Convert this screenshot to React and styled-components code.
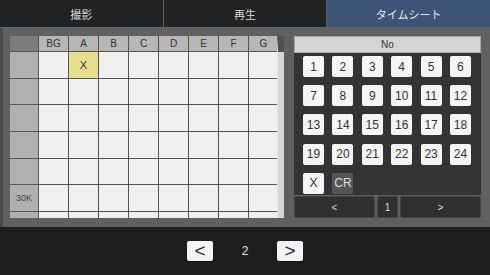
import React from "react";
import styled, { createGlobalStyle } from "styled-components";

const GlobalStyle = createGlobalStyle`
  body {
    margin: 0;
    background: #1e1e1e;
    font-family: "Liberation Sans", "Noto Sans CJK JP", sans-serif;
    -webkit-font-smoothing: antialiased;
  }
`;

const Screen = styled.div`
  width: 490px;
  height: 275px;
  display: flex;
  flex-direction: column;
  overflow: hidden;
`;

const TabBar = styled.div`
  display: flex;
  height: 27px;
  gap: 1px;
  background: #5a5f66;
  border-bottom: 1px solid #5b6676;
`;

const Tab = styled.div`
  flex: 1;
  display: flex;
  align-items: center;
  justify-content: center;
  font-size: 11px;
  color: ${(p) => (p.$active ? "#e4e8ee" : "#d8d8d8")};
  background: ${(p) => (p.$active ? "#3c5576" : "#222222")};
`;

const Main = styled.div`
  height: 199px;
  display: flex;
  gap: 10px;
  padding: 8px 9px 0 7px;
  background: #606060;
  border-left: 3px solid #4c4c4c;
  box-sizing: border-box;
`;

const GridPanel = styled.div`
  width: 274px;
  height: 182px;
  display: flex;
  overflow: hidden;
`;

const Table = styled.div`
  flex: 1;
  display: grid;
  grid-template-columns: 28px repeat(8, 29px);
  grid-auto-rows: 25.7px;
  grid-template-rows: 15px;
  gap: 1px;
  background: #555555;
  align-content: start;
  overflow: hidden;
`;

const HeadCell = styled.div`
  display: flex;
  align-items: center;
  justify-content: center;
  font-size: 10px;
  color: #333;
  background: ${(p) => (p.$corner ? "#7d7d7d" : "#b6b6b6")};
`;

const LabelCell = styled.div`
  display: flex;
  align-items: center;
  justify-content: center;
  font-size: 9px;
  color: #444;
  background: #b0b0b0;
`;

const Cell = styled.div`
  display: flex;
  align-items: center;
  justify-content: center;
  font-size: 11px;
  color: #333;
  background: ${(p) => (p.$marked ? "#e6e08c" : "#f0f0f0")};
`;

const Scrollbar = styled.div`
  width: 7px;
  background: #d6d6d6;
  border-top: 16px solid #505050;
  border-left: 1px solid #e8e8e8;
  box-sizing: border-box;
`;

const RightPanel = styled.div`
  width: 187px;
  display: flex;
  flex-direction: column;
`;

const NoHeader = styled.div`
  height: 17px;
  display: flex;
  align-items: center;
  justify-content: center;
  font-size: 10px;
  color: #333;
  background: #d4d4d4;
  border: 1px solid #a8a8a8;
  box-sizing: border-box;
`;

const Keypad = styled.div`
  height: 142px;
  display: grid;
  grid-template-columns: repeat(6, 21px);
  grid-auto-rows: 21px;
  column-gap: 8.4px;
  row-gap: 8.2px;
  padding: 3px 0 0 9px;
  background: #333333;
  box-sizing: border-box;
`;

const Key = styled.div`
  display: flex;
  align-items: center;
  justify-content: center;
  border-radius: 2px;
  font-size: 12px;
  color: ${(p) => (p.$dark ? "#dcdcdc" : "#333333")};
  background: ${(p) => (p.$dark ? "#555555" : "#f5f5f5")};
`;

const PageNav = styled.div`
  height: 22px;
  margin-top: 1px;
  display: flex;
  gap: 2px;
`;

const NavSeg = styled.div`
  width: ${(p) => p.$w}px;
  display: flex;
  align-items: center;
  justify-content: center;
  font-size: 10px;
  color: #dddddd;
  background: #303030;
  border: 1px solid #444;
  border-radius: 2px;
  box-sizing: border-box;
`;

const Footer = styled.div`
  flex: 1;
  display: flex;
  align-items: center;
  justify-content: center;
  gap: 26px;
  background: #1e1e1e;
`;

const FootButton = styled.div`
  width: 26px;
  height: 20px;
  display: flex;
  align-items: center;
  justify-content: center;
  border-radius: 2px;
  background: #f4f4f4;
  box-shadow: 0 1px 1px rgba(0, 0, 0, 0.5);
  font-size: 19px;
  color: #222;
`;

const PageNum = styled.div`
  width: 12px;
  text-align: center;
  font-size: 12px;
  color: #e6e6e6;
`;

const columns = ["BG", "A", "B", "C", "D", "E", "F", "G"];
const rows = ["", "", "", "", "", "30K", ""];
const keys = Array.from({ length: 24 }, (_, i) => String(i + 1));

export default function App() {
  return (
    <Screen>
      <GlobalStyle />
      <TabBar>
        <Tab>撮影</Tab>
        <Tab>再生</Tab>
        <Tab $active>タイムシート</Tab>
      </TabBar>
      <Main>
        <GridPanel>
          <Table>
            <HeadCell $corner />
            {columns.map((c) => (
              <HeadCell key={c}>{c}</HeadCell>
            ))}
            {rows.map((label, r) => (
              <React.Fragment key={r}>
                <LabelCell>{label}</LabelCell>
                {columns.map((c) => {
                  const marked = r === 0 && c === "A";
                  return (
                    <Cell key={c} $marked={marked}>
                      {marked ? "X" : ""}
                    </Cell>
                  );
                })}
              </React.Fragment>
            ))}
          </Table>
          <Scrollbar />
        </GridPanel>
        <RightPanel>
          <NoHeader>No</NoHeader>
          <Keypad>
            {keys.map((k) => (
              <Key key={k}>{k}</Key>
            ))}
            <Key>X</Key>
            <Key $dark>CR</Key>
          </Keypad>
          <PageNav>
            <NavSeg $w={81}>&lt;</NavSeg>
            <NavSeg $w={21}>1</NavSeg>
            <NavSeg $w={81}>&gt;</NavSeg>
          </PageNav>
        </RightPanel>
      </Main>
      <Footer>
        <FootButton>&lt;</FootButton>
        <PageNum>2</PageNum>
        <FootButton>&gt;</FootButton>
      </Footer>
    </Screen>
  );
}
